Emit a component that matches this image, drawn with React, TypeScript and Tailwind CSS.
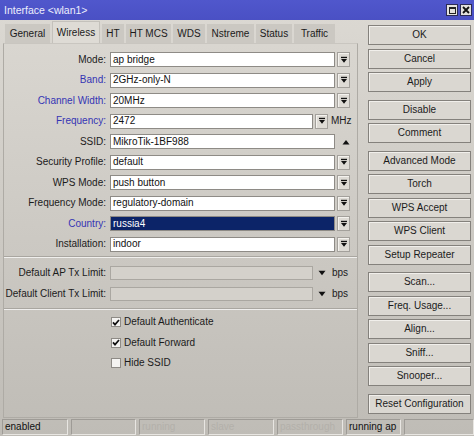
import React from 'react'

type Field = {
  label: string
  value: string
  blue?: boolean
  kind: 'dd' | 'mhz' | 'up'
  selected?: boolean
}

const FIELDS: Field[] = [
  { label: 'Mode', value: 'ap bridge', kind: 'dd' },
  { label: 'Band', value: '2GHz-only-N', blue: true, kind: 'dd' },
  { label: 'Channel Width', value: '20MHz', blue: true, kind: 'dd' },
  { label: 'Frequency', value: '2472', blue: true, kind: 'mhz' },
  { label: 'SSID', value: 'MikroTik-1BF988', kind: 'up' },
  { label: 'Security Profile', value: 'default', kind: 'dd' },
  { label: 'WPS Mode', value: 'push button', kind: 'dd' },
  { label: 'Frequency Mode', value: 'regulatory-domain', kind: 'dd' },
  { label: 'Country', value: 'russia4', blue: true, kind: 'dd', selected: true },
  { label: 'Installation', value: 'indoor', kind: 'dd' },
]

const TABS = [
  { t: 'General', w: 'w-[45px]' },
  { t: 'Wireless', w: 'w-[48px]' },
  { t: 'HT', w: 'w-[22px]' },
  { t: 'HT MCS', w: 'w-[45px]' },
  { t: 'WDS', w: 'w-[32px]' },
  { t: 'Nstreme', w: 'w-[47px]' },
  { t: 'Status', w: 'w-[36px]' },
  { t: 'Traffic', w: 'w-[41px]' },
]

const BUTTON_GROUPS = [
  ['OK', 'Cancel', 'Apply'],
  ['Disable', 'Comment'],
  ['Advanced Mode', 'Torch', 'WPS Accept', 'WPS Client', 'Setup Repeater'],
  ['Scan...', 'Freq. Usage...', 'Align...', 'Sniff...', 'Snooper...'],
  ['Reset Configuration'],
]

const STATUS = [
  { text: 'enabled', w: 'w-[66px]' },
  { text: '', w: 'w-[65px]' },
  { text: 'running', w: 'w-[66px]', off: true },
  { text: 'slave', w: 'w-[66px]', off: true },
  { text: 'passthrough', w: 'w-[66px]', off: true },
  { text: 'running ap', w: 'w-[55px]' },
  { text: '', w: 'flex-1' },
]

function DropIcon() {
  return (
    <svg width="8" height="8" viewBox="0 0 8 8">
      <rect x="1" y="0.8" width="6" height="1.3" fill="#111" />
      <path d="M1 3h6L4 6.8z" fill="#111" />
    </svg>
  )
}

function DropButton() {
  return (
    <div className="ml-[2px] flex h-[15px] w-[13px] items-center justify-center border border-[#a3a09b] bg-[#dedbd5] shadow-[inset_1px_1px_0_#f4f2ee]">
      <DropIcon />
    </div>
  )
}

function FormRow({ f }: { f: Field }) {
  return (
    <div className="flex h-[15px] items-center">
      <div className={`w-[102px] text-right ${f.blue ? 'text-[#3434b4]' : 'text-[#1b1b1b]'}`}>{f.label}:</div>
      <div
        className={`ml-[4px] flex h-[15px] items-center border border-[#8e8b86] px-[2px] ${
          f.kind === 'mhz' ? 'w-[203px]' : 'w-[225px]'
        } ${f.selected ? 'bg-[#0c2468] text-white' : 'bg-white text-[#111]'}`}
      >
        {f.value}
      </div>
      {f.kind === 'dd' && <DropButton />}
      {f.kind === 'mhz' && (
        <>
          <DropButton />
          <span className="ml-[3px] text-[#1b1b1b]">MHz</span>
        </>
      )}
      {f.kind === 'up' && (
        <svg className="ml-[7px]" width="8" height="6" viewBox="0 0 8 6">
          <path d="M0.5 5.5h7L4 1z" fill="#111" />
        </svg>
      )}
    </div>
  )
}

function LimitRow({ label }: { label: string }) {
  return (
    <div className="flex h-[14px] items-center">
      <div className="w-[102px] whitespace-nowrap text-right text-[#1b1b1b]">{label}:</div>
      <div className="ml-[4px] h-[14px] w-[203px] border border-[#aaa7a1] bg-[#d4d1cb]" />
      <svg className="ml-[5px]" width="8" height="6" viewBox="0 0 8 6">
        <path d="M0.5 0.8h7L4 5.2z" fill="#111" />
      </svg>
      <span className="ml-[6px] text-[#1b1b1b]">bps</span>
    </div>
  )
}

function CheckRow({ label, checked }: { label: string; checked: boolean }) {
  return (
    <div className="flex h-[15px] items-center pl-[107px]">
      <div className="flex h-[10px] w-[10px] items-center justify-center border border-[#8e8b86] bg-[#f4f3f1]">
        {checked && (
          <svg width="8" height="7" viewBox="0 0 8 7">
            <path d="M1 3.4l2 2.2L7 1" stroke="#111" strokeWidth="1.7" fill="none" />
          </svg>
        )}
      </div>
      <span className="ml-[3px] text-[#1b1b1b]">{label}</span>
    </div>
  )
}

function Separator() {
  return <div className="h-[2px] border-t border-[#a9a6a0] border-b-white/70 border-b" />
}

export default function App() {
  return (
    <div className="flex h-[436px] w-[474px] flex-col overflow-hidden bg-linear-to-b from-[#dcd9d3] to-[#bfbcb6] text-[10px] leading-none font-['Liberation_Sans',Arial,sans-serif]">
      {/* title bar */}
      <div className="flex h-[20px] items-center justify-between bg-linear-to-b from-[#5057cc] to-[#4a50c4] pl-[4px] pr-[2px]">
        <span className="text-[10.5px] text-[#eceefc]">Interface &lt;wlan1&gt;</span>
        <div className="flex gap-[2px]">
          <div className="flex h-[12px] w-[12px] items-center justify-center border border-[#2b2b55] bg-[#e4e2de]">
            <div className="h-[7px] w-[7px] border border-t-2 border-[#222]" />
          </div>
          <div className="flex h-[12px] w-[12px] items-center justify-center border border-[#2b2b55] bg-[#e4e2de]">
            <svg width="8" height="8" viewBox="0 0 8 8">
              <path d="M1 1l6 6M7 1l-6 6" stroke="#111" strokeWidth="1.8" />
            </svg>
          </div>
        </div>
      </div>

      <div className="flex flex-1">
        {/* left: tabs + form */}
        <div className="flex w-[358px] flex-col pl-[3px] pt-[1px]">
          <div className="flex h-[22px] items-end gap-[2px] pl-[2px]">
            {TABS.map(({ t, w }) =>
              t === 'Wireless' ? (
                <div
                  key={t}
                  className={`${w} flex h-[22px] shrink-0 justify-center whitespace-nowrap border-x border-t border-[#c4c1bb] bg-[#dedbd5] pt-[6px] text-[#1b1b1b]`}
                >
                  {t}
                </div>
              ) : (
                <div
                  key={t}
                  className={`${w} flex h-[19px] shrink-0 items-center justify-center whitespace-nowrap bg-[#cbc8c2] text-[#1b1b1b]`}
                >
                  {t}
                </div>
              )
            )}
          </div>
          <div className="mb-[1px] flex flex-1 flex-col border border-[#aeaba5] border-t-[#c9c6c0]">
            <div className="flex flex-col gap-[5.5px] pt-[8px]">
              {FIELDS.map((f) => (
                <FormRow key={f.label} f={f} />
              ))}
            </div>
            <div className="mt-[4px]">
              <Separator />
            </div>
            <div className="mt-[8px] flex flex-col gap-[7px]">
              <LimitRow label="Default AP Tx Limit" />
              <LimitRow label="Default Client Tx Limit" />
            </div>
            <div className="mt-[7px]">
              <Separator />
            </div>
            <div className="mt-[5px] flex flex-col gap-[5.5px]">
              <CheckRow label="Default Authenticate" checked />
              <CheckRow label="Default Forward" checked />
              <CheckRow label="Hide SSID" checked={false} />
            </div>
          </div>
        </div>

        {/* right: buttons */}
        <div className="ml-[10px] flex w-[103px] flex-col gap-[7.5px] pt-[5px]">
          {BUTTON_GROUPS.map((g, i) => (
            <div key={i} className="flex flex-col gap-[3.5px]">
              {g.map((b) => (
                <div
                  key={b}
                  className="flex h-[20px] items-center justify-center border border-[#84817c] bg-[#dad7d1] text-[#1b1b1b] shadow-[inset_1px_1px_0_#f1efeb]"
                >
                  {b}
                </div>
              ))}
            </div>
          ))}
        </div>
      </div>

      {/* status bar */}
      <div className="flex h-[17px] gap-[3px] pl-[2px] pb-[1px]">
        {STATUS.map((s, i) => (
          <div
            key={i}
            className={`${s.w} flex items-center border border-[#9e9b96] border-b-[#e8e6e2] border-r-[#e8e6e2] pl-[2px] ${
              s.off ? 'text-[#b3b0aa]' : 'text-[#111]'
            }`}
          >
            {s.text}
          </div>
        ))}
      </div>
    </div>
  )
}
